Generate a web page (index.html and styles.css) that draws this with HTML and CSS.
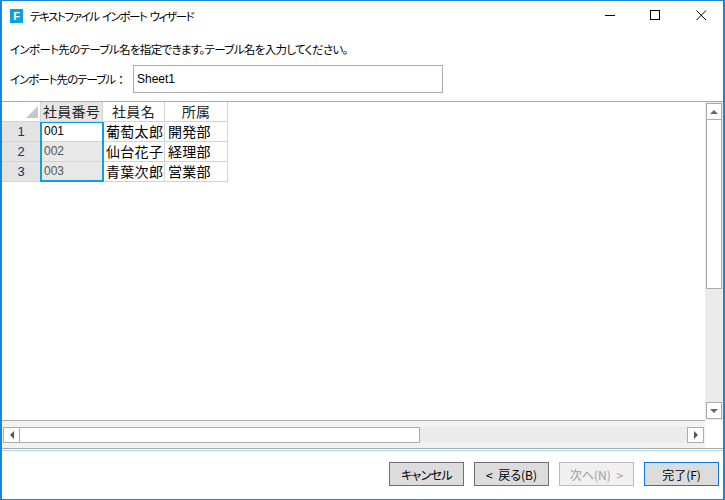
FILE: index.html
```html
<!DOCTYPE html>
<html lang="ja">
<head>
<meta charset="utf-8">
<title>テキストファイル インポート ウィザード</title>
<link rel="stylesheet" href="styles.css">
</head>
<body>
<div class="window">
  <header class="titlebar">
    <span class="logo">F</span>
    <span class="title">テキストファイル インポート ウィザード</span>
    <div class="controls">
      <svg class="ctl" width="11" height="11" viewBox="0 0 11 11"><path d="M0 5.5h10" stroke="#000" fill="none"/></svg>
      <svg class="ctl max" width="11" height="11" viewBox="0 0 11 11"><rect x=".5" y=".5" width="9" height="9" stroke="#000" fill="none"/></svg>
      <svg class="ctl close" width="11" height="11" viewBox="0 0 11 11"><path d="M.5 .5l9.5 9.5M10 .5L.5 10" stroke="#000" fill="none"/></svg>
    </div>
  </header>
  <section class="form">
    <p class="hint">インポート先のテーブル名を指定できます。テーブル名を入力してください。</p>
    <div class="field">
      <label class="label">インポート先のテーブル<span class="colon">：</span></label>
      <div class="input">Sheet1</div>
    </div>
  </section>
  <section class="sheet">
    <div class="sheet-top">
      <div class="cells">
        <div class="grid">
          <div class="corner"><span class="tri"></span></div>
          <div class="chead active">社員番号</div><div class="chead">社員名</div><div class="chead">所属</div>
          <div class="rhead">1</div><div class="cell first">001</div><div class="cell jp">葡萄太郎</div><div class="cell jp">開発部</div>
          <div class="rhead">2</div><div class="cell sel">002</div><div class="cell jp">仙台花子</div><div class="cell jp">経理部</div>
          <div class="rhead">3</div><div class="cell sel">003</div><div class="cell jp">青葉次郎</div><div class="cell jp">営業部</div>
          <div class="selbox"></div>
        </div>
      </div>
      <div class="vbar">
        <div class="sbtn"><span class="arrow up"></span></div>
        <div class="vthumb"></div>
        <div class="vtrack"></div>
        <div class="sbtn"><span class="arrow down"></span></div>
      </div>
    </div>
    <div class="hrow">
      <div class="hbar">
        <div class="sbtn h"><span class="arrow left"></span></div>
        <div class="hthumb"></div>
        <div class="htrack"></div>
        <div class="sbtn h"><span class="arrow right"></span></div>
      </div>
    </div>
  </section>
  <footer class="footer">
    <button class="btn cancel">キャンセル</button>
    <button class="btn">&lt; 戻る(B)</button>
    <button class="btn off">次へ(N) &gt;</button>
    <button class="btn primary">完了(F)</button>
  </footer>
</div>
</body>
</html>
```
FILE: styles.css
```css
* { box-sizing: border-box; }
html, body { margin: 0; padding: 0; }
body { width: 725px; height: 500px; overflow: hidden; background: #fff; font-family: "Noto Sans CJK JP", "Noto Sans", sans-serif; font-size: 12px; color: #000; }
.window { width: 725px; height: 500px; border: 2px solid #1a85d8; border-bottom-width: 1px; border-top-width: 1px; display: flex; flex-direction: column; }
.titlebar { height: 30px; display: flex; align-items: center; padding: 0 0 1px 8px; flex: none; }
.logo { width: 13px; height: 14px; background: #0ea0e4; color: #fff; font: bold 11px/14px "Liberation Sans", sans-serif; text-align: center; }
.title { margin-left: 7px; font-size: 11.5px; letter-spacing: -1.4px; word-spacing: 2px; font-feature-settings: "palt"; white-space: nowrap; }
.controls { margin-left: auto; display: flex; }
.ctl { width: 11px; margin-left: 34px; }
.ctl.close { margin-left: 35px; margin-right: 16px; }
.form { height: 70px; padding: 10px 0 0 8px; flex: none; }
.hint { margin: 0; font-size: 11.5px; line-height: 17px; letter-spacing: -0.65px; font-feature-settings: "palt"; white-space: nowrap; }
.field { display: flex; align-items: center; margin-top: 7px; }
.label { width: 123px; font-size: 11.5px; letter-spacing: -1px; font-feature-settings: "palt"; white-space: nowrap; }
.colon { margin-left: 3px; }
.input { width: 310px; height: 28px; border: 1px solid #ababab; padding-left: 3px; font: 12px/26px "Liberation Sans", sans-serif; }
.sheet { height: 348px; flex: none; border-top: 1px solid #ababab; border-bottom: 1px solid #ababab; display: flex; flex-direction: column; }
.sheet-top { flex: 1; display: flex; min-height: 0; }
.cells { flex: 1; background: #fff; }
.grid { position: relative; display: grid; grid-template-columns: 39px 62px 62px 63px; grid-auto-rows: 20px; width: 226px; }
.corner { background: #fff; border-right: 1px solid #d4d4d4; border-bottom: 1px solid #d4d4d4; position: relative; }
.tri { position: absolute; right: 2px; bottom: 3px; width: 0; height: 0; border-left: 12px solid transparent; border-bottom: 12px solid #c8c8c8; }
.chead { text-align: center; font-size: 14px; line-height: 19px; letter-spacing: 0.3px; color: #222; border-right: 1px solid #d4d4d4; border-bottom: 1px solid #d4d4d4; background: #fff; white-space: nowrap; overflow: hidden; }
.chead.active { background: #e6e6e6; }
.rhead { background: #e3e3e3; color: #222a78; text-align: center; font: 13px/19px "Liberation Sans", sans-serif; border-right: 1px solid #cfcfcf; border-bottom: 1px solid #d4d4d4; }
.cell { font: 12px/19px "Liberation Sans", sans-serif; padding-left: 3px; border-right: 1px solid #d4d4d4; border-bottom: 1px solid #d4d4d4; white-space: nowrap; overflow: hidden; }
.cell.jp { font: 14px/19px "Noto Sans CJK JP", sans-serif; letter-spacing: 0.3px; padding-left: 3px; }
.sel { background: #e8e8e8; color: #555; }
.selbox { position: absolute; left: 38px; top: 20px; width: 64px; height: 60px; border: 2px solid #0e9fe0; border-top-width: 1px; }
.vbar { width: 18px; padding: 1px 1px 1px 1px; background: #ebebeb; display: flex; flex-direction: column; }
.sbtn { width: 16px; height: 17px; flex: none; background: #fff; border: 1px solid #adadad; display: flex; align-items: center; justify-content: center; }
.sbtn.h { height: 16px; width: 17px; }
.vthumb { height: 169px; width: 16px; background: #fff; border: 1px solid #adadad; border-top: 0; }
.vtrack { flex: 1; }
.arrow { width: 0; height: 0; display: block; }
.arrow.up { border: 4px solid transparent; border-top: 0; border-bottom: 4px solid #666; }
.arrow.down { border: 4px solid transparent; border-bottom: 0; border-top: 4px solid #666; }
.arrow.left { border: 4px solid transparent; border-left: 0; border-right: 4px solid #555; }
.arrow.right { border: 4px solid transparent; border-right: 0; border-left: 4px solid #555; }
.hrow { height: 28px; flex: none; background: #f2f2f2; border-top: 1px solid #adadad; margin-right: 18px; padding: 6px 1px 0 1px; display: flex; align-items: flex-start; }
.hbar { flex: 1; height: 16px; display: flex; background: #ebebeb; }
.hthumb { width: 400px; background: #fff; border: 1px solid #adadad; border-left: 0; }
.htrack { flex: 1; }
.footer { flex: 1; margin-top: 1px; border-top: 1px solid #a7dcea; display: flex; justify-content: flex-end; align-items: flex-start; gap: 10px; padding: 11px 4px 0 0; }
.btn { width: 75px; height: 24px; padding: 0; background: #dcdcdc; border: 1px solid #707070; font: 12px "Noto Sans CJK JP", sans-serif; font-feature-settings: "palt"; word-spacing: 3px; color: #000; }
.btn.cancel { letter-spacing: -0.7px; }
.btn.off { background: #f0f0f0; border-color: #bcbcbc; color: #a0a0a0; }
.btn.primary { border-color: #0f78d4; }
```
